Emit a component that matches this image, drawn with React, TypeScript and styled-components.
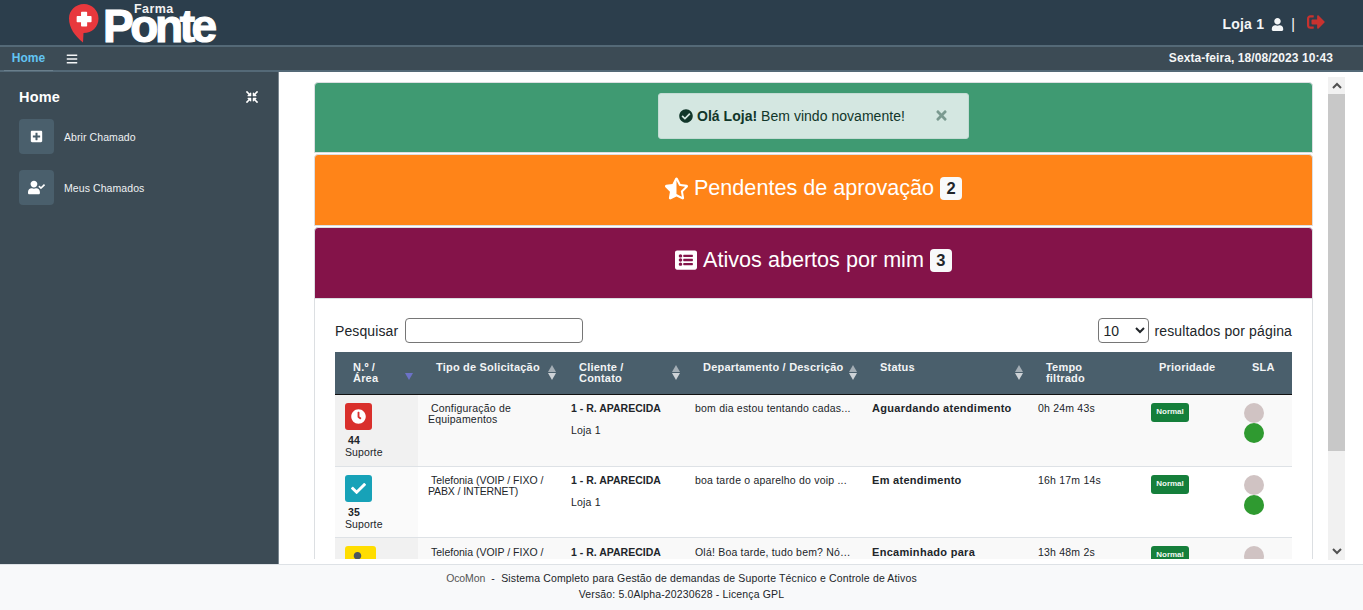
import React from "react";
import styled, { createGlobalStyle } from "styled-components";
import { FaUser, FaSignOutAlt, FaBars, FaPlusSquare, FaUserCheck, FaCompressArrowsAlt, FaCheckCircle, FaStarHalfAlt, FaListAlt, FaClock, FaCheck, FaTimes } from "react-icons/fa";

const Global = createGlobalStyle`
  html, body { margin: 0; padding: 0; height: 100%; overflow: hidden; }
  body { font-family: "Liberation Sans", Arial, sans-serif; color: #212529; background: #fff; }
  * { box-sizing: border-box; }
`;

const Page = styled.div`display: flex; flex-direction: column; width: 1363px; height: 610px; overflow: hidden;`;

const Header = styled.header`
  height: 45px; flex: none; background: #2c3e4c; display: flex; align-items: flex-start; justify-content: space-between;
  padding: 0 38px 0 69px; color: #fff;
`;
const Logo = styled.div`display: flex; align-items: flex-start; gap: 4px; height: 45px;`;
const PinSvg = styled.svg`margin-top: 4px; flex: none;`;
const Wordmark = styled.div`display: flex; flex-direction: column; align-items: flex-start; width: 114px; height: 45px; padding-top: 4px;`;
const Farma = styled.span`margin-left: 31px; font-size: 12.5px; line-height: 11px; height: 11px; font-weight: 700; letter-spacing: .4px; color: #f2f2f2;`;
const Ponte = styled.span`
  font-size: 46px; line-height: 29px; height: 29px; margin-top: -3px; font-weight: 700;
  letter-spacing: -3.4px; color: #fff; -webkit-text-stroke: 1.2px #fff;
`;
const UserBox = styled.div`display: flex; align-items: center; height: 45px; font-size: 14px; font-weight: 700; letter-spacing: .2px; color: #f4f6f7; padding-top: 3px;`;
const UserName = styled.span`margin-right: 7px;`;
const Sep = styled.span`margin: 0 12px 0 7px; font-weight: 400; font-size: 14px; color: #fff;`;
const Logout = styled.span`color: #c8322f; font-size: 18px; display: flex; margin-top: -4px;`;

const NavBar = styled.nav`
  height: 27px; flex: none; background: #3c4b55; border-top: 2px solid #546977; border-bottom: 2px solid #546977;
  display: flex; align-items: center; justify-content: space-between; padding: 0 30px 0 4px;
`;
const NavLeft = styled.div`display: flex; align-items: center; height: 100%;`;
const HomeTab = styled.a`
  color: #62c4f3; font-size: 12px; font-weight: 700; width: 49px; text-align: center; height: 25px; line-height: 25px;
  border-bottom: 1px solid #6a7f8c; margin-right: 13px;
`;
const Burger = styled.span`color: #f4f6f7; font-size: 12px; display: flex;`;
const DateText = styled.span`color: #f4f6f7; font-size: 12px; font-weight: 700; letter-spacing: .07px; margin-top: -1px;`;

const Body = styled.div`flex: 1; min-height: 0; display: flex;`;
const Sidebar = styled.aside`width: 279px; flex: none; background: #3c4b55; border-right: 1px solid #7a8790; padding: 16px 19px 0; color: #fff;`;
const SideHead = styled.div`display: flex; justify-content: space-between; align-items: center; height: 17px; padding-right: 1px; margin-bottom: 14px;`;
const SideTitle = styled.h2`margin: 0; font-size: 14.5px; font-weight: 700; color: #fff; letter-spacing: .2px;`;
const SideItem = styled.a`display: flex; align-items: center; gap: 10px; height: 35px; margin-bottom: 16px; font-size: 10.5px; color: #eef1f3; letter-spacing: .08px;`;
const SideIcon = styled.span`width: 35px; height: 35px; border-radius: 4px; background: #4a5f6c; color: #fff; display: flex; align-items: center; justify-content: center; font-size: 13px;`;

const Main = styled.main`flex: 1; min-width: 0; display: flex; background: #fff; padding: 5px 18px 4px 35px; gap: 15px;`;
const Scroller = styled.div`flex: 1; min-width: 0; overflow: hidden; display: flex; flex-direction: column; padding-top: 5px; margin-bottom: 1px;`;

const Banner = styled.div<{ $bg: string; $h: number; $pb: number }>`
  background: ${p => p.$bg}; height: ${p => p.$h}px; flex: none; border: 1px solid #dcdfe2; border-radius: 4px 4px 0 0; margin-bottom: 1px; padding-bottom: ${p => p.$pb}px;
  display: flex; align-items: center; justify-content: center; color: #fff; font-size: 21.6px; gap: 6px;
`;
const Alert = styled.div`
  width: 311px; height: 46px; background: #d4e7e1; border: 1px solid #c3dbd4; border-radius: 3px; color: #11362a;
  display: flex; align-items: center; padding: 0 20px; font-size: 14px; justify-content: space-between;
`;
const AlertText = styled.span`display: flex; align-items: center; gap: 4px; white-space: pre; letter-spacing: .03px;`;
const CloseX = styled.span`color: #7b9a90; font-size: 15px; display: flex; margin-right: -1px;`;
const Count = styled.span`background: #f8f9fa; color: #212529; font-size: 16.5px; font-weight: 700; border-radius: 4px; width: 22px; text-align: center; height: 23px; line-height: 23px;`;

const CardBody = styled.section`flex: 1; border-left: 1px solid #dcdfe2; border-right: 1px solid #dcdfe2; padding: 19px 20px 0; min-height: 0; overflow: hidden; margin-top: -1px;`;
const Controls = styled.div`display: flex; justify-content: space-between; align-items: center; height: 25px; font-size: 14px; color: #212529; margin-bottom: 9px;`;
const SearchGroup = styled.label`display: flex; align-items: center; gap: 7px; letter-spacing: .1px;`;
const LengthGroup = styled.label`display: flex; align-items: center; gap: 5px; letter-spacing: .14px;`;
const SearchInput = styled.input`width: 178px; height: 25px; border: 1px solid #767676; border-radius: 4px; background: #fff;`;
const PageSelect = styled.select`width: 51px; height: 25px; border: 1px solid #767676; border-radius: 4px; background: #fff; font-size: 14px; padding-left: 0; font-family: inherit; color: #212529;`;

const Table = styled.table`width: 957px; border-collapse: collapse; table-layout: fixed; font-size: 10.5px;`;
const Th = styled.th<{ $w: number }>`
  width: ${p => p.$w}px; height: 42px; background: #4a5f6c; color: #f2f4f5; font-size: 11px; font-weight: 700; letter-spacing: .2px; line-height: 11px;
  text-align: left; vertical-align: top; padding: 10px 0 0 18px; position: relative; border-bottom: 1px solid #111; white-space: nowrap;
`;
const Sort = styled.span`
  position: absolute; right: 4px; top: 13px; width: 9px; height: 15px;
  &::before, &::after { content: ""; position: absolute; left: 0; border-left: 4.5px solid transparent; border-right: 4.5px solid transparent; }
  &::before { top: 0; border-bottom: 7px solid #a4aeb5; }
  &::after { bottom: 0; border-top: 7px solid #ced3d7; }
`;
const SortDown = styled.span`
  position: absolute; right: 5px; top: 21px; border-left: 4.5px solid transparent; border-right: 4.5px solid transparent; border-top: 7px solid #6c72c8;
`;
const Tr = styled.tr<{ $h: number; $odd?: boolean }>`
  height: ${p => p.$h}px; background: ${p => (p.$odd ? "#f9f9f9" : "#fff")};
`;
const Td = styled.td`padding: 8px 10px 0; vertical-align: top; border-bottom: 1px solid #dee2e6; letter-spacing: .2px; line-height: 11px; color: #212529; overflow: hidden;`;
const TextCell = styled(Td)<{ $pt: number }>`padding-top: ${p => p.$pt}px;`;
const AreaCell = styled(Td)<{ $odd?: boolean }>`background: ${p => (p.$odd ? "#f1f1f1" : "#fafafa")}; letter-spacing: .12px;`;
const StateIcon = styled.span<{ $bg: string; $fg: string; $w: number; $pr: number }>`
  display: flex; align-items: center; justify-content: center; width: ${p => p.$w}px; height: 27px; padding-right: ${p => p.$pr}px; border-radius: 3px; background: ${p => p.$bg}; color: ${p => p.$fg}; font-size: 15px; margin-bottom: 5px;
`;
const Num = styled.b`display: block; padding-left: 3px; margin-bottom: 1px;`;
const Line = styled.div`white-space: nowrap; overflow: hidden; text-overflow: ellipsis;`;
const TipoLine = styled.span<{ $ls: number; $indent?: boolean }>`display: block; white-space: nowrap; letter-spacing: ${p => p.$ls}px; padding-left: ${p => (p.$indent ? 3 : 0)}px;`;
const Client = styled.b`display: block; margin-bottom: 11px; letter-spacing: 0; white-space: nowrap;`;
const Status = styled.b`display: block; font-size: 11px; letter-spacing: .29px; white-space: nowrap;`;
const Badge = styled.span`display: inline-block; background: #157f3b; color: #f1f7f3; font-size: 8px; font-weight: 700; border-radius: 3px; width: 38px; height: 19px; line-height: 18px; text-align: center; letter-spacing: 0;`;
const Dot = styled.span<{ $c: string }>`display: block; width: 20px; height: 20px; border-radius: 50%; background: ${p => p.$c};`;

const ScrollBar = styled.div`width: 17px; flex: none; background: #f1f1f1; display: flex; flex-direction: column;`;
const ScrollBtn = styled.div`height: 17px; flex: none; display: flex; align-items: center; justify-content: center;`;
const Thumb = styled.div`height: 357px; flex: none; background: #c8c8c8;`;
const Track = styled.div`flex: 1;`;

const Footer = styled.footer`height: 46px; flex: none; background: #f8f9fa; border-top: 1px solid #dee2e6; text-align: center; font-size: 10.5px; line-height: 16px; padding-top: 5px; color: #212529; letter-spacing: .15px;`;
const Brand = styled.span`color: #555; letter-spacing: -.1px;`;

const cols = [83, 143, 124, 177, 166, 113, 93, 58];
const rows = [
  { h: 72, odd: true, pt: 8, pr: 0, n: "44", bg: "#d9302c", fg: "#fff", w: 27, icon: <FaClock />, tipo: "Configuração de", tipo2: "Equipamentos", ls: 0.2, ls2: 0.2, desc: "bom dia estou tentando cadas...", st: "Aguardando atendimento", t: "0h 24m 43s" },
  { h: 71, odd: false, pt: 8, pr: 0, n: "35", bg: "#17a2b8", fg: "#fff", w: 27, icon: <FaCheck />, tipo: "Telefonia (VOIP / FIXO /", tipo2: "PABX / INTERNET)", ls: 0, ls2: -0.12, desc: "boa tarde o aparelho do voip ...", st: "Em atendimento", t: "16h 17m 14s" },
  { h: 71, odd: true, pt: 9, pr: 6, n: "31", bg: "#ffdd00", fg: "#4a5560", w: 31, icon: <FaUser />, tipo: "Telefonia (VOIP / FIXO /", tipo2: "PABX / INTERNET)", ls: 0, ls2: -0.12, desc: "Olá! Boa tarde, tudo bem? Nós...", st: "Encaminhado para", t: "13h 48m 2s" },
];

const Chevron = ({ up }: { up?: boolean }) => (
  <svg width="10" height="7" viewBox="0 0 10 7"><path d={up ? "M1 6 L5 2 L9 6" : "M1 1 L5 5 L9 1"} fill="none" stroke="#505050" strokeWidth="2" /></svg>
);

export default function App() {
  return (
    <Page>
      <Global />
      <Header>
        <Logo>
          <PinSvg width="30" height="39" viewBox="0 0 30 39">
            <path d="M15 0C6.500 0 0 6.500 0 14.500C0 24 6 32 14 38.500L14.500 29C23 29 29.500 23 29.500 14.500C29.500 6.500 23 0 15 0z" fill="#e8383d" />
            <path d="M12.800 8.500h4.600v4.300h4.400v4.600h-4.400v4.300h-4.600v-4.300H8.400v-4.600h4.400z" fill="#fff" stroke="#fff" strokeLinejoin="round" strokeWidth="1.500" />
          </PinSvg>
          <Wordmark>
            <Farma>Farma</Farma>
            <Ponte>Ponte</Ponte>
          </Wordmark>
        </Logo>
        <UserBox>
          <UserName>Loja 1</UserName>
          <FaUser size={13} />
          <Sep>|</Sep>
          <Logout><FaSignOutAlt /></Logout>
        </UserBox>
      </Header>
      <NavBar>
        <NavLeft>
          <HomeTab>Home</HomeTab>
          <Burger><FaBars /></Burger>
        </NavLeft>
        <DateText>Sexta-feira, 18/08/2023 10:43</DateText>
      </NavBar>
      <Body>
        <Sidebar>
          <SideHead>
            <SideTitle>Home</SideTitle>
            <FaCompressArrowsAlt size={12} />
          </SideHead>
          <SideItem><SideIcon><FaPlusSquare /></SideIcon>Abrir Chamado</SideItem>
          <SideItem><SideIcon><FaUserCheck size={17} /></SideIcon>Meus Chamados</SideItem>
        </Sidebar>
        <Main>
          <Scroller>
            <Banner $bg="#3f9a72" $h={71} $pb={4}>
              <Alert>
                <AlertText><FaCheckCircle size={14} /><span><b>Olá Loja!</b> Bem vindo novamente!</span></AlertText>
                <CloseX><FaTimes /></CloseX>
              </Alert>
            </Banner>
            <Banner $bg="#ff8418" $h={72} $pb={4}>
              <FaStarHalfAlt size={23} />
              <span>Pendentes de aprovação</span>
              <Count>2</Count>
            </Banner>
            <Banner $bg="#841349" $h={72} $pb={6}>
              <FaListAlt size={22} />
              <span>Ativos abertos por mim</span>
              <Count>3</Count>
            </Banner>
            <CardBody>
              <Controls>
                <SearchGroup>Pesquisar <SearchInput /></SearchGroup>
                <LengthGroup>
                  <PageSelect defaultValue="10"><option>10</option></PageSelect> resultados por página
                </LengthGroup>
              </Controls>
              <Table>
                <thead>
                  <tr>
                    <Th $w={cols[0]}>N.º /<br />Área<SortDown /></Th>
                    <Th $w={cols[1]}>Tipo de Solicitação<Sort /></Th>
                    <Th $w={cols[2]}>Cliente /<br />Contato<Sort /></Th>
                    <Th $w={cols[3]}>Departamento / Descrição<Sort /></Th>
                    <Th $w={cols[4]}>Status<Sort /></Th>
                    <Th $w={cols[5]}>Tempo<br />filtrado</Th>
                    <Th $w={cols[6]}>Prioridade</Th>
                    <Th $w={cols[7]}>SLA</Th>
                  </tr>
                </thead>
                <tbody>
                  {rows.map(r => (
                    <Tr key={r.n} $h={r.h} $odd={r.odd}>
                      <AreaCell $odd={r.odd}>
                        <StateIcon $bg={r.bg} $fg={r.fg} $w={r.w} $pr={r.pr}>{r.icon}</StateIcon>
                        <Num>{r.n}</Num>Suporte
                      </AreaCell>
                      <TextCell $pt={r.pt}><TipoLine $ls={r.ls} $indent>{r.tipo}</TipoLine><TipoLine $ls={r.ls2}>{r.tipo2}</TipoLine></TextCell>
                      <TextCell $pt={r.pt}><Client>1 - R. APARECIDA</Client>Loja 1</TextCell>
                      <TextCell $pt={r.pt}><Line>{r.desc}</Line></TextCell>
                      <TextCell $pt={r.pt}><Status>{r.st}</Status></TextCell>
                      <TextCell $pt={r.pt}>{r.t}</TextCell>
                      <Td><Badge>Normal</Badge></Td>
                      <Td><Dot $c="#d0c3c3" /><Dot $c="#2f9a30" /></Td>
                    </Tr>
                  ))}
                </tbody>
              </Table>
            </CardBody>
          </Scroller>
          <ScrollBar>
            <ScrollBtn><Chevron up /></ScrollBtn>
            <Thumb />
            <Track />
            <ScrollBtn><Chevron /></ScrollBtn>
          </ScrollBar>
        </Main>
      </Body>
      <Footer>
        <Brand>OcoMon</Brand> &nbsp;-&nbsp; Sistema Completo para Gestão de demandas de Suporte Técnico e Controle de Ativos<br />
        Versão: 5.0Alpha-20230628 - Licença GPL
      </Footer>
    </Page>
  );
}
